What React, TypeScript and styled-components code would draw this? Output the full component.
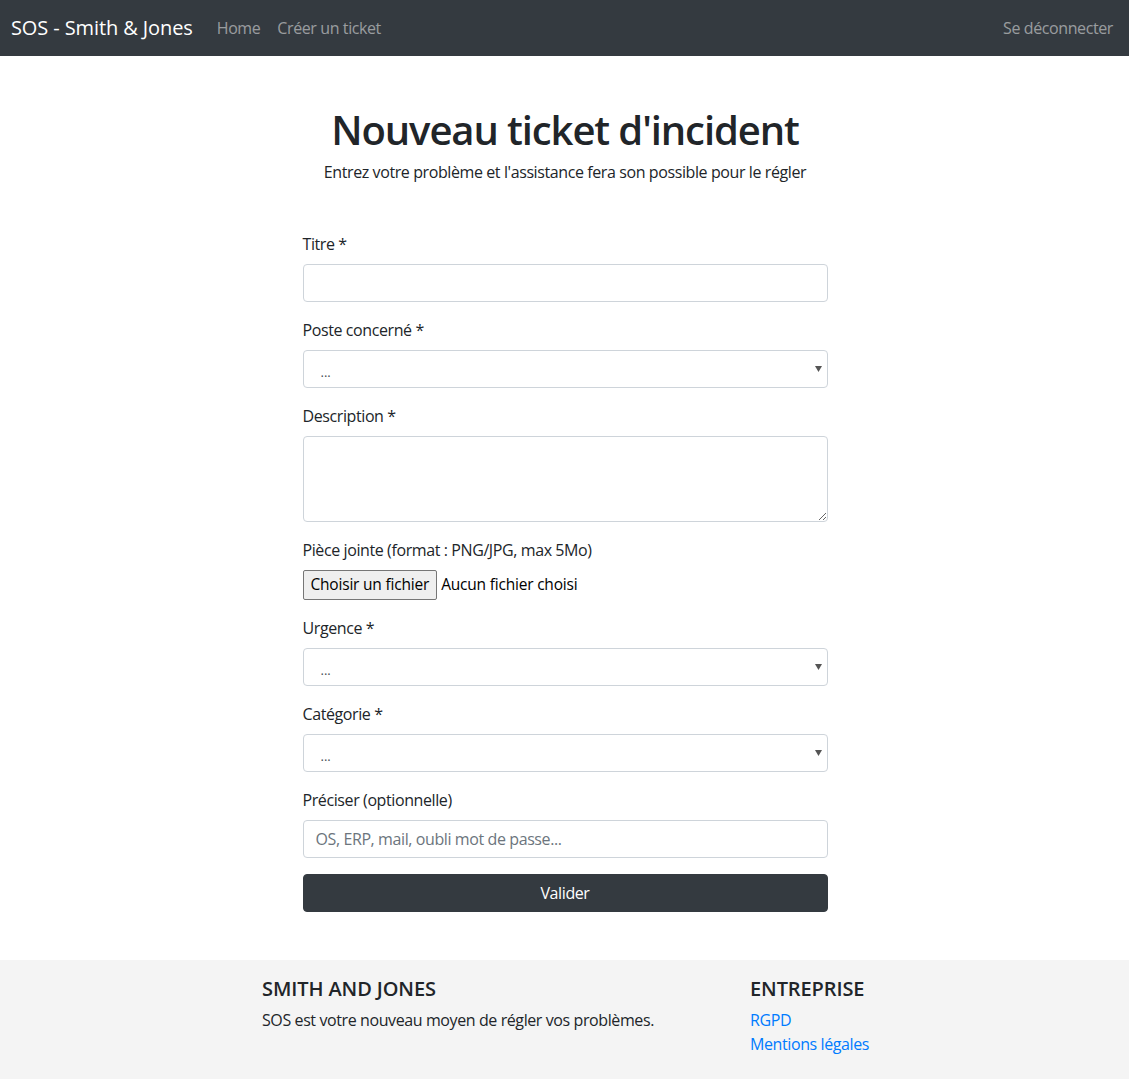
import React from "react";
import styled, { createGlobalStyle } from "styled-components";

const FONT = `"Open Sans", "Noto Sans", "Liberation Sans", sans-serif`;
const LS = "-0.4px";

const Global = createGlobalStyle`
  * { box-sizing: border-box; }
  html, body { margin: 0; padding: 0; background: #fff; }
  body {
    font-family: ${FONT};
    font-size: 16px;
    line-height: 1.5;
    letter-spacing: ${LS};
    color: #212529;
  }
`;

const Page = styled.div`
  min-height: 1079px;
  display: flex;
  flex-direction: column;
`;

const Navbar = styled.nav`
  height: 56px;
  background: #343a40;
  display: flex;
  align-items: center;
  padding: 0 16px 0 11px;
`;

const Brand = styled.a`
  color: #fff;
  font-size: 20px;
  line-height: 30px;
  letter-spacing: -0.1px;
  margin-right: 24px;
  text-decoration: none;
  white-space: nowrap;
`;

const NavLinks = styled.div`
  display: flex;
  gap: 17px;
  flex: 1;
`;

const NavLink = styled.a`
  color: rgba(255, 255, 255, 0.5);
  font-size: 16px;
  text-decoration: none;
  white-space: nowrap;
`;

const Main = styled.main`
  flex: 1;
  display: flex;
  flex-direction: column;
  align-items: center;
  padding: 50px 0 48px 1px;
`;

const Title = styled.h1`
  margin: 0 0 6px;
  font-size: 40px;
  line-height: 48px;
  font-weight: 600;
  letter-spacing: -1.1px;
  text-align: center;
`;

const Lead = styled.p`
  margin: 0 0 48px;
  font-size: 16px;
  line-height: 24px;
  text-align: center;
`;

const Form = styled.form`
  width: 525px;
  display: flex;
  flex-direction: column;
  gap: 16px;
`;

const Group = styled.div`
  display: flex;
  flex-direction: column;
`;

const Label = styled.label`
  font-size: 16px;
  line-height: 24px;
  margin-bottom: 8px;
`;

const Input = styled.input`
  height: 38px;
  width: 100%;
  padding: 6px 12px;
  font-family: ${FONT};
  font-size: 16px;
  letter-spacing: ${LS};
  color: #495057;
  border: 1px solid #ced4da;
  border-radius: 4px;
  background: #fff;
  outline: none;
  &::placeholder {
    color: #6c757d;
  }
`;

const TextArea = styled.textarea`
  height: 86px;
  width: 100%;
  padding: 6px 12px;
  font-family: ${FONT};
  font-size: 16px;
  border: 1px solid #ced4da;
  border-radius: 4px;
  outline: none;
  resize: vertical;
`;

const SelectWrap = styled.div`
  position: relative;
`;

const Select = styled.select`
  appearance: none;
  -webkit-appearance: none;
  height: 38px;
  width: 100%;
  padding: 6px 12px 0 17px;
  font-family: ${FONT};
  font-size: 13px;
  color: #495057;
  border: 1px solid #ced4da;
  border-radius: 4px;
  background: #fff;
  outline: none;
`;

const Caret = styled.svg`
  position: absolute;
  right: 6px;
  top: 16px;
  width: 7px;
  height: 6px;
  pointer-events: none;
`;

const FileRow = styled.div`
  display: flex;
  align-items: center;
  gap: 4px;
`;

const FileButton = styled.span`
  display: inline-flex;
  align-items: center;
  height: 30px;
  padding: 0 7px;
  background: #efefef;
  border: 1px solid #767676;
  border-radius: 2px;
  font-size: 15.5px;
  letter-spacing: -0.2px;
  color: #000;
`;

const FileText = styled.span`
  font-size: 15.5px;
  letter-spacing: -0.2px;
  color: #000;
`;

const Submit = styled.button`
  height: 38px;
  width: 100%;
  background: #343a40;
  color: #fff;
  border: 1px solid #343a40;
  border-radius: 4px;
  font-family: ${FONT};
  font-size: 16px;
  letter-spacing: ${LS};
  cursor: pointer;
`;

const Footer = styled.footer`
  background: #f4f4f4;
  padding: 17px 0 24px 262px;
  display: flex;
`;

const FooterCol = styled.div<{ $w?: number }>`
  width: ${(p) => (p.$w ? `${p.$w}px` : "auto")};
  display: flex;
  flex-direction: column;
`;

const FooterTitle = styled.h5`
  margin: 0 0 7px;
  font-size: 20px;
  line-height: 24px;
  font-weight: 600;
  letter-spacing: -0.1px;
  text-transform: uppercase;
`;

const FooterText = styled.p`
  margin: 0;
  font-size: 16px;
  line-height: 24px;
`;

const FooterLink = styled.a`
  color: #007bff;
  text-decoration: none;
  font-size: 16px;
  line-height: 24px;
`;

const CaretIcon = () => (
  <Caret viewBox="0 0 7 6">
    <polygon points="0,0 7,0 3.5,6" fill="#555" />
  </Caret>
);

const SelectField = ({ label }: { label: string }) => (
  <Group>
    <Label>{label}</Label>
    <SelectWrap>
      <Select defaultValue="">
        <option value="">...</option>
      </Select>
      <CaretIcon />
    </SelectWrap>
  </Group>
);

export default function App() {
  return (
    <Page>
      <Global />
      <Navbar>
        <Brand href="#">SOS - Smith &amp; Jones</Brand>
        <NavLinks>
          <NavLink href="#">Home</NavLink>
          <NavLink href="#">Créer un ticket</NavLink>
        </NavLinks>
        <NavLink href="#">Se déconnecter</NavLink>
      </Navbar>
      <Main>
        <Title>Nouveau ticket d'incident</Title>
        <Lead>Entrez votre problème et l'assistance fera son possible pour le régler</Lead>
        <Form onSubmit={(e) => e.preventDefault()}>
          <Group>
            <Label>Titre *</Label>
            <Input type="text" />
          </Group>
          <SelectField label="Poste concerné *" />
          <Group>
            <Label>Description *</Label>
            <TextArea rows={3} />
          </Group>
          <Group>
            <Label>Pièce jointe (format : PNG/JPG, max 5Mo)</Label>
            <FileRow>
              <FileButton>Choisir un fichier</FileButton>
              <FileText>Aucun fichier choisi</FileText>
            </FileRow>
          </Group>
          <SelectField label="Urgence *" />
          <SelectField label="Catégorie *" />
          <Group>
            <Label>Préciser (optionnelle)</Label>
            <Input type="text" placeholder="OS, ERP, mail, oubli mot de passe..." />
          </Group>
          <Submit type="submit">Valider</Submit>
        </Form>
      </Main>
      <Footer>
        <FooterCol $w={488}>
          <FooterTitle>Smith and Jones</FooterTitle>
          <FooterText>SOS est votre nouveau moyen de régler vos problèmes.</FooterText>
        </FooterCol>
        <FooterCol>
          <FooterTitle>Entreprise</FooterTitle>
          <FooterLink href="#">RGPD</FooterLink>
          <FooterLink href="#">Mentions légales</FooterLink>
        </FooterCol>
      </Footer>
    </Page>
  );
}
